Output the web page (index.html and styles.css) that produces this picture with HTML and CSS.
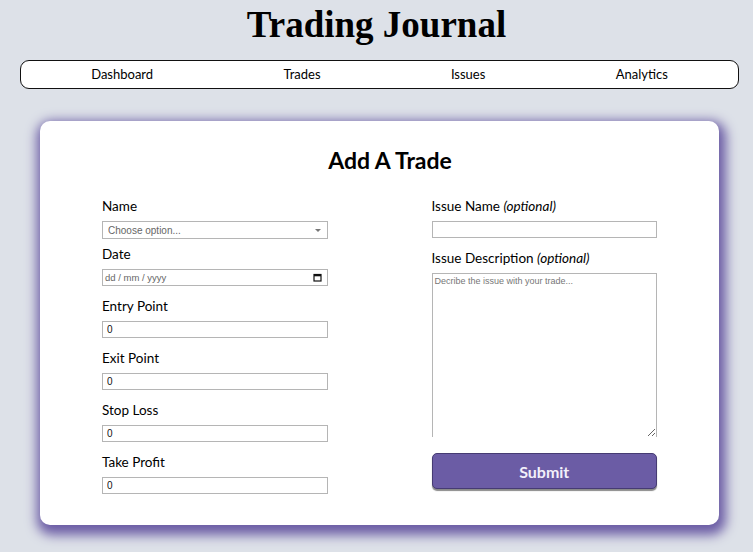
FILE: index.html
```html
<!DOCTYPE html>
<html lang="en">
<head>
<meta charset="utf-8">
<title>Trading Journal</title>
<link rel="stylesheet" href="styles.css">
</head>
<body>
<h1 class="site-title">Trading Journal</h1>
<nav class="nav">
  <a class="nav-link" href="#">Dashboard</a>
  <a class="nav-link" href="#">Trades</a>
  <a class="nav-link" href="#">Issues</a>
  <a class="nav-link" href="#">Analytics</a>
</nav>
<main class="card">
  <h2 class="card-title">Add A Trade</h2>
  <form class="form-grid">
    <div class="col">
      <div class="field field-tight">
        <label class="label">Name</label>
        <div class="select-wrap">
          <select class="input select"><option>Choose option...</option></select>
          <span class="select-arrow"></span>
        </div>
      </div>
      <div class="field">
        <label class="label">Date</label>
        <div class="input date-input">
          <span class="date-text">dd / mm / yyyy</span>
          <svg class="cal-icon" width="9" height="9" viewBox="0 0 9 9"><rect x="1" y="1.5" width="7" height="6.5" fill="none" stroke="#111" stroke-width="1.2"/><rect x="1" y="1.5" width="7" height="1.8" fill="#111"/></svg>
        </div>
      </div>
      <div class="field">
        <label class="label">Entry Point</label>
        <input class="input" type="text" value="0">
      </div>
      <div class="field">
        <label class="label">Exit Point</label>
        <input class="input" type="text" value="0">
      </div>
      <div class="field">
        <label class="label">Stop Loss</label>
        <input class="input" type="text" value="0">
      </div>
      <div class="field">
        <label class="label">Take Profit</label>
        <input class="input" type="text" value="0">
      </div>
    </div>
    <div class="col">
      <div class="field">
        <label class="label">Issue Name <em>(optional)</em></label>
        <input class="input" type="text">
      </div>
      <div class="field">
        <label class="label">Issue Description <em>(optional)</em></label>
        <textarea class="input textarea" placeholder="Decribe the issue with your trade..."></textarea>
      </div>
      <button class="submit" type="button">Submit</button>
    </div>
  </form>
</main>
</body>
</html>
```
FILE: styles.css
```css
* { box-sizing: border-box; }
html, body { margin: 0; padding: 0; }
body {
  background: #dde1e8;
  font-family: "Lato", "Noto Sans", sans-serif;
  color: #111;
  height: 552px;
  overflow: hidden;
}
.site-title {
  margin: 5px 0 0;
  height: 40px;
  line-height: 40px;
  text-align: center;
  font-family: "Liberation Serif", serif;
  font-weight: bold;
  font-size: 37px;
  color: #000;
}
.nav {
  margin: 15px 14px 0 20px;
  height: 29px;
  background: #fff;
  border: 1px solid #111;
  border-radius: 9px;
  display: flex;
  justify-content: space-around;
  align-items: center;
  padding: 0 5px;
}
.nav-link {
  font-size: 13px;
  color: #000;
  text-decoration: none;
  line-height: 27px;
}
.card {
  margin: 32px 34px 0 40px;
  height: 404px;
  background: #fff;
  border-radius: 10px;
  box-shadow: 2px 5px 12px 5px #6b5ca5;
  padding: 26px 62px 0;
}
.card-title {
  margin: 0 0 24px;
  padding-left: 21px;
  text-align: center;
  font-size: 23px;
  line-height: 26px;
  font-weight: bold;
  color: #000;
}
.form-grid {
  display: grid;
  grid-template-columns: 1fr 1fr;
  column-gap: 104px;
}
.col { display: flex; flex-direction: column; }
.field { display: flex; flex-direction: column; margin-bottom: 11px; }
.field-tight { margin-bottom: 6px; }
.label {
  font-size: 13.5px;
  line-height: 18px;
  margin-bottom: 6px;
  color: #000;
}
.label em { font-style: italic; }
.input {
  display: block;
  width: 100%;
  height: 17px;
  margin: 0;
  padding: 0 4px;
  border: 1px solid #b5b5b5;
  background: #fff;
  font-family: "Liberation Sans", Arial, sans-serif;
  font-size: 10px;
  color: #111;
  outline: none;
  border-radius: 0;
}
.select-wrap { position: relative; }
.select {
  -webkit-appearance: none;
  appearance: none;
  height: 18px;
  color: #666;
  padding-left: 5px;
}
.select-arrow {
  position: absolute;
  right: 7px;
  top: 8px;
  width: 0;
  height: 0;
  border-left: 3.5px solid transparent;
  border-right: 3.5px solid transparent;
  border-top: 3.5px solid #777;
}
.date-input {
  display: flex;
  align-items: center;
  justify-content: space-between;
  padding: 0 5px 0 2px;
}
.date-text { color: #666; font-size: 9.5px; }
.cal-icon { display: block; }
.textarea {
  height: 164px;
  resize: both;
  padding: 2px 2px;
  font-size: 9px;
  border-bottom: none;
}
.textarea::placeholder { color: #777; }
.submit {
  margin-top: 5px;
  height: 36px;
  width: 100%;
  background: #6b5ca5;
  border: 1px solid #463b73;
  border-radius: 5px;
  box-shadow: 0 2px 1px #8a8a8a;
  color: #f2f0fa;
  font-family: "Lato", "Noto Sans", sans-serif;
  font-weight: bold;
  font-size: 16px;
}
```
